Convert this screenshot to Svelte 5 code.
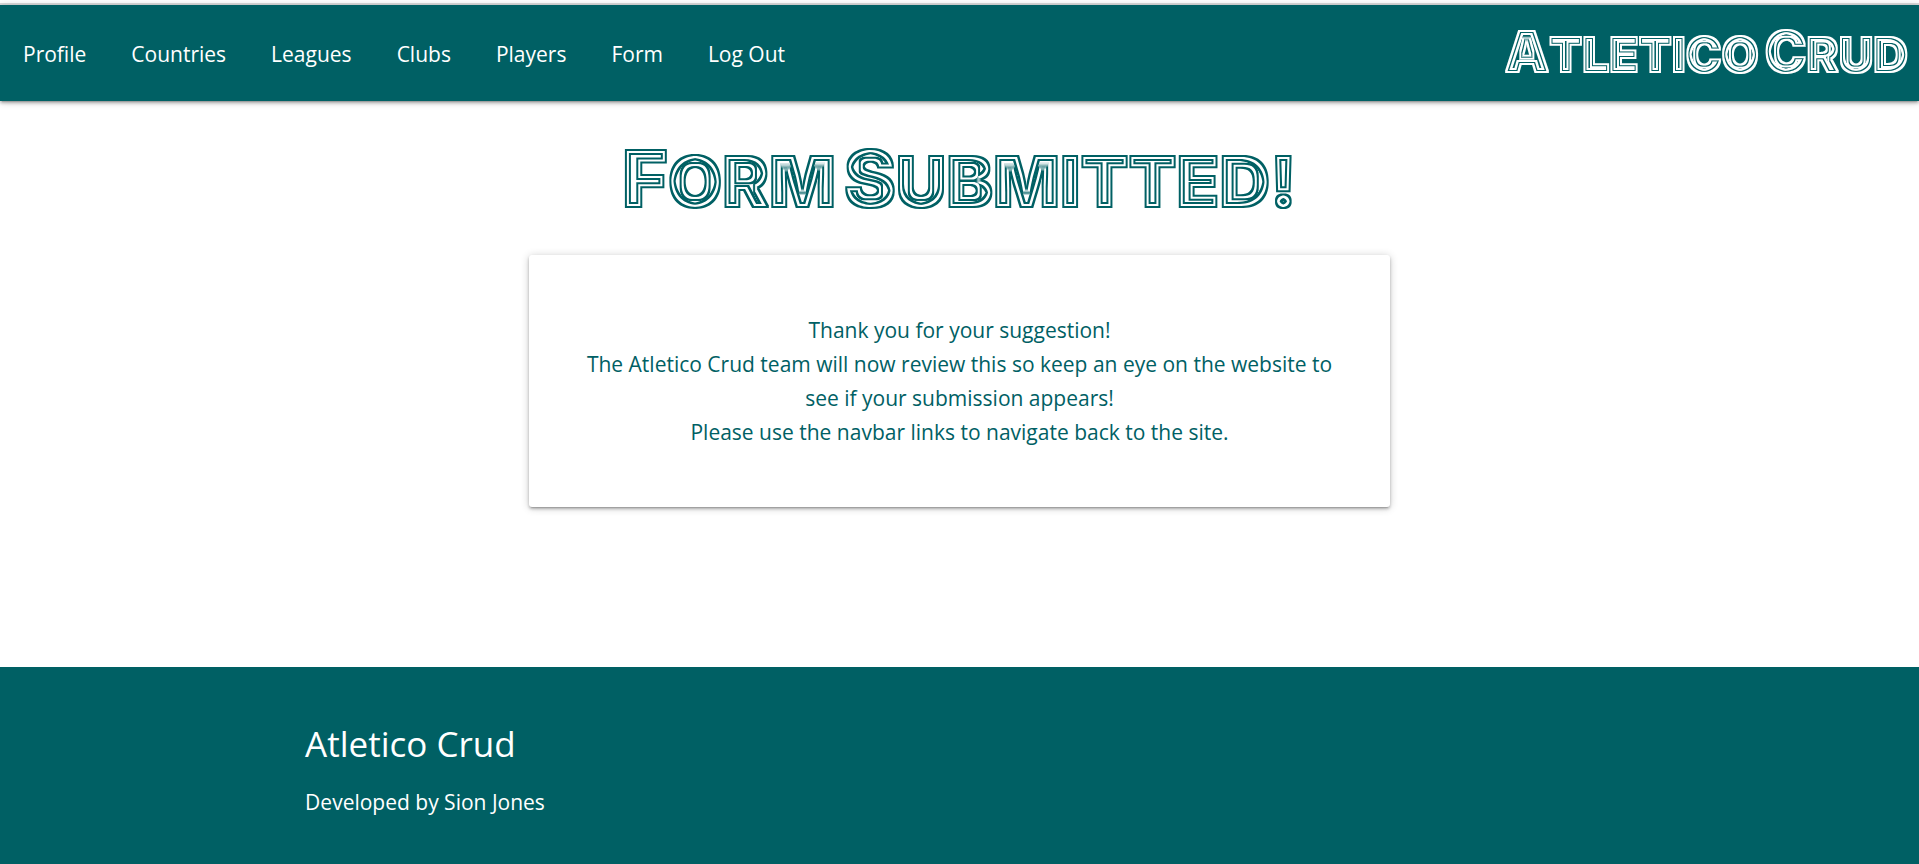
<script>
  const links = ['Profile', 'Countries', 'Leagues', 'Clubs', 'Players', 'Form', 'Log Out'];
  const brand = ['Atletico', 'Crud'];
  const heading = ['Form', 'Submitted!'];
</script>

<!-- Filters that cut evenly spaced inner lines into heavy display lettering -->
<svg class="defs" width="0" height="0" aria-hidden="true">
  <filter id="lines-large" x="-2%" y="-5%" width="104%" height="110%" color-interpolation-filters="sRGB">
    <feMorphology in="SourceGraphic" operator="dilate" radius="1" result="wide" />
    <feMorphology in="SourceGraphic" operator="erode" radius="1" result="a" />
    <feMorphology in="SourceGraphic" operator="erode" radius="3" result="b" />
    <feMorphology in="SourceGraphic" operator="erode" radius="5" result="c" />
    <feComposite in="wide" in2="a" operator="out" result="outer" />
    <feComposite in="b" in2="c" operator="out" result="inner" />
    <feMerge><feMergeNode in="outer" /><feMergeNode in="inner" /></feMerge>
  </filter>
  <filter id="lines-small" x="-2%" y="-5%" width="104%" height="110%" color-interpolation-filters="sRGB">
    <feMorphology in="SourceGraphic" operator="dilate" radius="1" result="wide" />
    <feMorphology in="SourceGraphic" operator="erode" radius="1" result="a" />
    <feMorphology in="SourceGraphic" operator="erode" radius="2" result="b" />
    <feMorphology in="SourceGraphic" operator="erode" radius="4" result="c" />
    <feComposite in="wide" in2="a" operator="out" result="outer" />
    <feComposite in="b" in2="c" operator="out" result="inner" />
    <feMerge><feMergeNode in="outer" /><feMergeNode in="inner" /></feMerge>
  </filter>
</svg>

<div class="page">
  <header>
    <nav>
      <ul>
        {#each links as link}
          <li><a href="#{link.toLowerCase().replace(' ', '-')}">{link}</a></li>
        {/each}
      </ul>
      <a class="display brand" href="#home">
        {#each brand as word}<span class="word">{word}</span>{/each}
      </a>
    </nav>
  </header>

  <main>
    <h1 class="display title">
      {#each heading as word}<span class="word">{word}</span>{/each}
    </h1>
    <section class="card">
      <p>Thank you for your suggestion!</p>
      <p>The Atletico Crud team will now review this so keep an eye on the website to see if your submission appears!</p>
      <p>Please use the navbar links to navigate back to the site.</p>
    </section>
  </main>

  <footer>
    <h2>Atletico Crud</h2>
    <p>Developed by Sion Jones</p>
  </footer>
</div>

<style>
  :global(body) {
    margin: 0;
    background: #fff;
  }
  .defs {
    position: absolute;
  }
  .page {
    display: flex;
    flex-direction: column;
    min-height: 100vh;
    box-sizing: border-box;
    padding-top: 3px;
    font-family: 'Open Sans', 'Noto Sans', sans-serif;
    font-size: 21px;
    line-height: 34px;
    color: #006064;
  }
  p,
  h1,
  h2,
  ul {
    margin: 0;
    padding: 0;
    font-weight: 400;
  }
  header {
    border-top: 2px solid #dcdcdc;
  }
  nav {
    display: flex;
    align-items: center;
    justify-content: space-between;
    min-height: 96px;
    padding: 0 11px 0 1px;
    background: #006064;
    box-shadow:
      0 2px 3px 0 rgba(0, 0, 0, 0.24),
      0 3px 1px -2px rgba(0, 0, 0, 0.12),
      0 1px 8px 0 rgba(0, 0, 0, 0.2);
  }
  ul {
    display: flex;
    gap: 1px;
    list-style: none;
  }
  a {
    color: #fff;
    text-decoration: none;
  }
  li a {
    display: block;
    padding: 32px 22px 30px;
  }
  .display {
    display: flex;
    font-family: Inter, sans-serif;
    font-weight: 900;
    text-transform: uppercase;
    white-space: nowrap;
  }
  .word {
    display: inline-block;
  }
  .brand {
    gap: 6px;
    font-size: 48px;
    line-height: 64px;
    filter: url(#lines-small);
  }
  .brand .word::first-letter {
    font-size: 56px;
  }
  main {
    flex: 1;
    display: flex;
    flex-direction: column;
    align-items: center;
  }
  .title {
    gap: 8px;
    margin: 38px 0 33px;
    font-size: 70px;
    line-height: 80px;
    filter: url(#lines-large);
  }
  .title .word::first-letter {
    font-size: 78px;
  }
  .card {
    width: 44.9%;
    box-sizing: border-box;
    padding: 58px 45px;
    border-radius: 3px;
    text-align: center;
    box-shadow:
      0 2px 3px 0 rgba(0, 0, 0, 0.24),
      0 3px 1px -2px rgba(0, 0, 0, 0.12),
      0 1px 8px 0 rgba(0, 0, 0, 0.2);
  }
  footer {
    box-sizing: border-box;
    padding: 56px 15.9% 45px;
    background: #006064;
    color: #fff;
  }
  h2 {
    margin-bottom: 21px;
    font-size: 35px;
    line-height: 41px;
  }
</style>
